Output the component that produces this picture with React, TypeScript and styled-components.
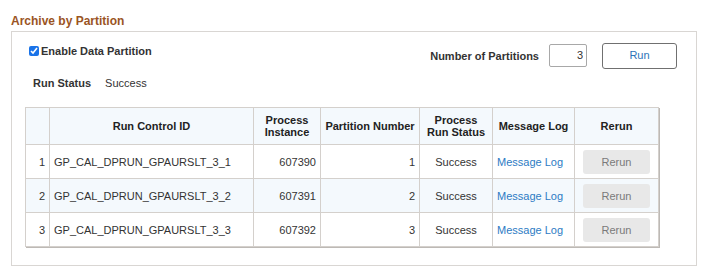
import styled, { createGlobalStyle } from "styled-components";

const GlobalStyle = createGlobalStyle`
  body {
    margin: 0;
    background: #ffffff;
    font-family: "Liberation Sans", Arial, sans-serif;
    font-size: 11px;
    color: #333333;
  }
`;

const rows = [
  { id: "GP_CAL_DPRUN_GPAURSLT_3_1", instance: "607390", partition: 1 },
  { id: "GP_CAL_DPRUN_GPAURSLT_3_2", instance: "607391", partition: 2 },
  { id: "GP_CAL_DPRUN_GPAURSLT_3_3", instance: "607392", partition: 3 },
];

const Page = () => {
  return (
    <>
      <GlobalStyle />
      <Wrapper>
        <Title>Archive by Partition</Title>
        <Group>
          <TopRow>
            <CheckLabel>
              <Check type="checkbox" defaultChecked />
              Enable Data Partition
            </CheckLabel>
            <Controls>
              <FieldLabel>Number of Partitions</FieldLabel>
              <NumberInput defaultValue="3" />
              <RunButton>Run</RunButton>
            </Controls>
          </TopRow>
          <StatusRow>
            <FieldLabel>Run Status</FieldLabel>
            <StatusValue>Success</StatusValue>
          </StatusRow>
          <Grid>
            <colgroup>
              <col style={{ width: 24 }} />
              <col style={{ width: 204 }} />
              <col style={{ width: 67 }} />
              <col style={{ width: 99 }} />
              <col style={{ width: 73 }} />
              <col style={{ width: 82 }} />
              <col style={{ width: 84 }} />
            </colgroup>
            <thead>
              <tr>
                <Th />
                <Th>Run Control ID</Th>
                <Th>
                  Process
                  <br />
                  Instance
                </Th>
                <Th>Partition Number</Th>
                <Th>
                  Process
                  <br />
                  Run Status
                </Th>
                <Th>Message Log</Th>
                <Th>Rerun</Th>
              </tr>
            </thead>
            <tbody>
              {rows.map((r, i) => (
                <Tr key={r.id} $striped={i % 2 === 1}>
                  <Td $align="right">{i + 1}</Td>
                  <Td>{r.id}</Td>
                  <Td $align="right">{r.instance}</Td>
                  <Td $align="right">{r.partition}</Td>
                  <Td $align="center">Success</Td>
                  <Td>
                    <LogLink href="#">Message Log</LogLink>
                  </Td>
                  <Td $align="center">
                    <RerunButton disabled>Rerun</RerunButton>
                  </Td>
                </Tr>
              ))}
            </tbody>
          </Grid>
        </Group>
      </Wrapper>
    </>
  );
};

const Wrapper = styled.div`
  padding: 13px 10px 12px 11px;
  width: 686px;
`;

const Title = styled.div`
  color: #9a5424;
  font-size: 12px;
  font-weight: bold;
  line-height: 17px;
  margin-bottom: 1px;
`;

const Group = styled.div`
  border: 1px solid #d9d6d3;
  padding: 11px 19px 18px 13px;
`;

const TopRow = styled.div`
  display: flex;
  justify-content: space-between;
  align-items: flex-start;
`;

const CheckLabel = styled.label`
  display: flex;
  align-items: center;
  gap: 2px;
  margin: 1px 0 0 4px;
  font-weight: bold;
  color: #333333;
  line-height: 14px;
`;

const Check = styled.input`
  width: 10px;
  height: 10px;
  margin: 0;
  accent-color: #1a73e8;
`;

const Controls = styled.div`
  display: flex;
  align-items: center;
`;

const FieldLabel = styled.span`
  font-weight: bold;
  color: #333333;
`;

const NumberInput = styled.input`
  box-sizing: border-box;
  width: 38px;
  height: 23px;
  margin: 0 15px 0 10px;
  padding: 0 3px;
  border: 1px solid #a8a8a8;
  border-radius: 2px;
  text-align: right;
  font-family: "Liberation Sans", Arial, sans-serif;
  font-size: 11px;
  color: #333333;
  position: relative;
  top: -1px;
`;

const RunButton = styled.button`
  box-sizing: border-box;
  width: 75px;
  height: 26px;
  background: #ffffff;
  border: 1px solid #707070;
  border-radius: 3px;
  color: #2d73b8;
  font-family: "Liberation Sans", Arial, sans-serif;
  font-size: 11px;
  padding: 0 0 3px;
`;

const StatusRow = styled.div`
  display: flex;
  gap: 14px;
  margin: 7px 0 0 8px;
  line-height: 14px;
`;

const StatusValue = styled.span`
  color: #333333;
`;

const Grid = styled.table`
  margin-top: 17px;
  border-collapse: collapse;
  table-layout: fixed;
  width: 633px;
  border: 1px solid #cdc9c5;
  box-shadow: 1px 1px 0 #bdb9b5;
`;

const Th = styled.th`
  height: 36px;
  padding: 0 4px;
  background: #f4f9fd;
  border: 1px solid #d4d0cc;
  color: #222222;
  font-weight: bold;
  font-size: 11px;
  line-height: 12px;
  text-align: center;
`;

const Tr = styled.tr<{ $striped: boolean }>`
  background: ${(p) => (p.$striped ? "#f4f9fd" : "#ffffff")};
`;

const Td = styled.td<{ $align?: "left" | "right" | "center" }>`
  height: 33px;
  padding: 0 4px;
  border: 1px solid #d4d0cc;
  text-align: ${(p) => p.$align ?? "left"};
  color: #333333;
  white-space: nowrap;
`;

const LogLink = styled.a`
  color: #2d7bc4;
  text-decoration: none;
`;

const RerunButton = styled.button`
  box-sizing: border-box;
  width: 67px;
  height: 24px;
  background: #e8e8e8;
  border: none;
  border-radius: 3px;
  color: #7a7a7a;
  font-family: "Liberation Sans", Arial, sans-serif;
  font-size: 11px;
`;

export default Page;
